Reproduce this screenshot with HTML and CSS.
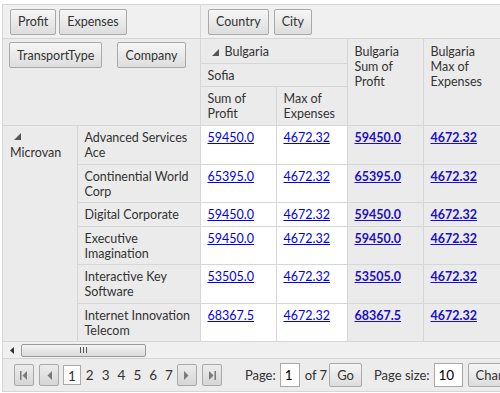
FILE: index.html
```html
<!DOCTYPE html>
<html lang="en">
<head>
  <meta charset="UTF-8">
  <title>Pivot Grid</title>
  <link rel="stylesheet" href="styles.css">
</head>
<body>
  <div class="pivot">
    <div class="toolbar">
      <div class="zone zone-data">
        <button class="field">Profit</button>
        <button class="field">Expenses</button>
      </div>
      <div class="zone zone-cols">
        <button class="field">Country</button>
        <button class="field">City</button>
      </div>
    </div>

    <div class="grid-view">
      <table class="grid">
        <colgroup>
          <col class="c-type">
          <col class="c-company">
          <col class="c-sum">
          <col class="c-max">
          <col class="c-tsum">
          <col class="c-tmax">
        </colgroup>
        <tr class="hrow-country">
          <td class="rows-zone" rowspan="3" colspan="2">
            <div class="rows-fields">
              <button class="field">TransportType</button>
              <button class="field">Company</button>
            </div>
          </td>
          <th colspan="2" class="expand"><span class="tri"></span>Bulgaria</th>
          <th rowspan="3">Bulgaria<br>Sum of<br>Profit</th>
          <th rowspan="3">Bulgaria<br>Max of<br>Expenses</th>
        </tr>
        <tr class="hrow-city">
          <th colspan="2">Sofia</th>
        </tr>
        <tr class="hrow-measure">
          <th>Sum of<br>Profit</th>
          <th>Max of<br>Expenses</th>
        </tr>
        <tr>
          <th class="group" rowspan="6"><span class="tri tri-block"></span>Microvan</th>
          <th>Advanced Services Ace</th>
          <td><a href="#">59450.0</a></td>
          <td><a href="#">4672.32</a></td>
          <td class="total"><a href="#">59450.0</a></td>
          <td class="total"><a href="#">4672.32</a></td>
        </tr>
        <tr>
          <th>Continential World Corp</th>
          <td><a href="#">65395.0</a></td>
          <td><a href="#">4672.32</a></td>
          <td class="total"><a href="#">65395.0</a></td>
          <td class="total"><a href="#">4672.32</a></td>
        </tr>
        <tr>
          <th>Digital Corporate</th>
          <td><a href="#">59450.0</a></td>
          <td><a href="#">4672.32</a></td>
          <td class="total"><a href="#">59450.0</a></td>
          <td class="total"><a href="#">4672.32</a></td>
        </tr>
        <tr>
          <th>Executive Imagination</th>
          <td><a href="#">59450.0</a></td>
          <td><a href="#">4672.32</a></td>
          <td class="total"><a href="#">59450.0</a></td>
          <td class="total"><a href="#">4672.32</a></td>
        </tr>
        <tr>
          <th>Interactive Key Software</th>
          <td><a href="#">53505.0</a></td>
          <td><a href="#">4672.32</a></td>
          <td class="total"><a href="#">53505.0</a></td>
          <td class="total"><a href="#">4672.32</a></td>
        </tr>
        <tr>
          <th>Internet Innovation Telecom</th>
          <td><a href="#">68367.5</a></td>
          <td><a href="#">4672.32</a></td>
          <td class="total"><a href="#">68367.5</a></td>
          <td class="total"><a href="#">4672.32</a></td>
        </tr>
      </table>
    </div>

    <div class="hscroll">
      <span class="scroll-arrow">
        <svg width="4" height="7" viewBox="0 0 4 7"><polygon points="4,0 4,7 0,3.5" fill="#333"/></svg>
      </span>
      <div class="thumb">
        <svg width="7" height="6" viewBox="0 0 7 6"><path d="M0.5 0v6M3.5 0v6M6.5 0v6" stroke="#555" stroke-width="1"/></svg>
      </div>
    </div>

    <div class="pager">
      <button class="nav">
        <svg width="8" height="9" viewBox="0 0 8 9"><rect x="0" y="0" width="1.5" height="9" fill="#7a7a7a"/><polygon points="7,0 7,9 2.5,4.5" fill="#7a7a7a"/></svg>
      </button>
      <button class="nav">
        <svg width="5" height="9" viewBox="0 0 5 9"><polygon points="5,0 5,9 0.5,4.5" fill="#7a7a7a"/></svg>
      </button>
      <div class="pages">
        <span class="page current">1</span>
        <span class="page">2</span>
        <span class="page">3</span>
        <span class="page">4</span>
        <span class="page">5</span>
        <span class="page">6</span>
        <span class="page">7</span>
      </div>
      <button class="nav">
        <svg width="5" height="9" viewBox="0 0 5 9"><polygon points="0,0 0,9 4.5,4.5" fill="#7a7a7a"/></svg>
      </button>
      <button class="nav">
        <svg width="8" height="9" viewBox="0 0 8 9"><polygon points="1,0 1,9 5.5,4.5" fill="#7a7a7a"/><rect x="6.5" y="0" width="1.5" height="9" fill="#7a7a7a"/></svg>
      </button>
      <span class="pager-label label-page">Page:</span>
      <input class="pager-input" type="text" value="1">
      <span class="pager-label label-of">of 7</span>
      <button class="field go">Go</button>
      <span class="pager-label label-size">Page size:</span>
      <input class="pager-input size" type="text" value="10">
      <button class="field change">Change</button>
    </div>
  </div>
</body>
</html>
```

FILE: styles.css
```css
body {
  margin: 0;
  overflow: hidden;
  font-family: Lato, "Noto Sans", sans-serif;
  font-size: 12.5px;
  color: #333333;
  background-color: #ffffff;
}
.pivot {
  width: 560px;
  margin: 4px 0 0 2px;
  border-top: 1px solid #d6d6d6;
  border-left: 1px solid #d6d6d6;
  background-color: #ececec;
}
.field {
  height: 26px;
  padding: 0 7px;
  font-family: inherit;
  font-size: 12.5px;
  color: #333333;
  background: linear-gradient(#f6f6f6, #dddddd);
  border: 1px solid #a9a9a9;
  border-radius: 2px;
  box-sizing: border-box;
  flex-shrink: 0;
}
.toolbar {
  display: flex;
  height: 33px;
  background-color: #f0f0f0;
  border-bottom: 1px solid #d6d6d6;
}
.zone {
  display: flex;
  align-items: center;
  gap: 3px;
  padding: 0 7px;
  box-sizing: border-box;
}
.zone-data {
  width: 198px;
  border-right: 1px solid #d6d6d6;
}
.zone-cols {
  gap: 5px;
}
.grid-view {
  height: 302px;
  overflow: hidden;
}
.grid {
  table-layout: fixed;
  border-collapse: collapse;
  width: 560px;
}
.c-type { width: 74px; }
.c-company { width: 123px; }
.c-sum { width: 76px; }
.c-max { width: 71px; }
.c-tsum { width: 76px; }
.c-tmax { width: 140px; }
.grid th, .grid td {
  padding: 4px 7px 3.5px;
  line-height: 15px;
  text-align: left;
  vertical-align: top;
  font-weight: normal;
  border: 1px solid #d6d6d6;
  background-color: #ebebeb;
}
.grid tr:first-child > * {
  border-top: none;
}
.grid td.rows-zone {
  padding: 3px 14px 0 6px;
  border-left: none;
  background-color: #ebebeb;
}
.rows-fields {
  display: flex;
  justify-content: space-between;
}
.grid .hrow-country th {
  padding: 5px 7px 4px;
}
.grid .hrow-city th {
  padding: 4px 7px 3px;
}
.grid .hrow-measure th {
  padding: 4px 7px;
}
.grid .hrow-country .expand {
  padding-left: 11px;
}
.tri {
  display: inline-block;
  width: 0;
  height: 0;
  margin-right: 6px;
  border-style: solid;
  border-width: 0 0 7px 7px;
  border-color: transparent transparent #555555 transparent;
}
.tri-block {
  display: block;
  margin: 3px 0 5px 4px;
}
.grid .group {
  border-left: none;
}
.grid td {
  background-color: #ffffff;
}
.grid td.total {
  background-color: #ebebeb;
}
.grid a {
  color: #0000ee;
  text-decoration: underline;
}
.grid td.total a {
  font-weight: bold;
  color: #1a0dcc;
}
.hscroll {
  display: flex;
  align-items: center;
  height: 16px;
  background-color: #f0f0f0;
  border-top: 1px solid #d6d6d6;
  border-bottom: 1px solid #d6d6d6;
}
.scroll-arrow {
  display: flex;
  width: 18px;
  justify-content: center;
}
.thumb {
  display: flex;
  align-items: center;
  justify-content: center;
  width: 125px;
  height: 13px;
  box-sizing: border-box;
  background: linear-gradient(#f4f4f4, #dadada);
  border: 1px solid #9a9a9a;
  border-radius: 2px;
}
.pager {
  display: flex;
  align-items: center;
  height: 32px;
  padding-left: 11px;
  background-color: #ececec;
  border-bottom: 1px solid #d6d6d6;
}
.pager > * {
  flex-shrink: 0;
}
.nav {
  display: flex;
  align-items: center;
  justify-content: center;
  width: 20px;
  height: 22px;
  margin-right: 5px;
  padding: 0;
  background: linear-gradient(#ececec, #d6d6d6);
  border: 1px solid #a9a9a9;
  border-radius: 2px;
}
.pages {
  display: flex;
  align-items: center;
  margin: 0 0 0 -1px;
}
.page {
  padding: 0 4px;
  font-size: 13.5px;
  line-height: 20px;
}
.page.current {
  height: 20px;
  padding: 0 4px;
  box-sizing: border-box;
  background-color: #ffffff;
  border: 1px solid #a9a9a9;
  margin-right: 1px;
}
.pager-label {
  font-size: 13px;
}
.label-page {
  margin-left: 18px;
  margin-right: 4px;
}
.pager-input {
  width: 20px;
  height: 24px;
  padding: 0 4px;
  box-sizing: border-box;
  font-family: inherit;
  font-size: 13.5px;
  color: #000000;
  border: 1px solid #a9a9a9;
}
.pager-input.size {
  width: 29px;
}
.label-of {
  margin: 0 2px 0 5px;
}
.go {
  height: 24px;
  padding: 0 7px;
  font-size: 13px;
}
.label-size {
  margin: 0 4px 0 12px;
}
.change {
  height: 24px;
  margin-left: 5px;
  font-size: 13px;
}
```
